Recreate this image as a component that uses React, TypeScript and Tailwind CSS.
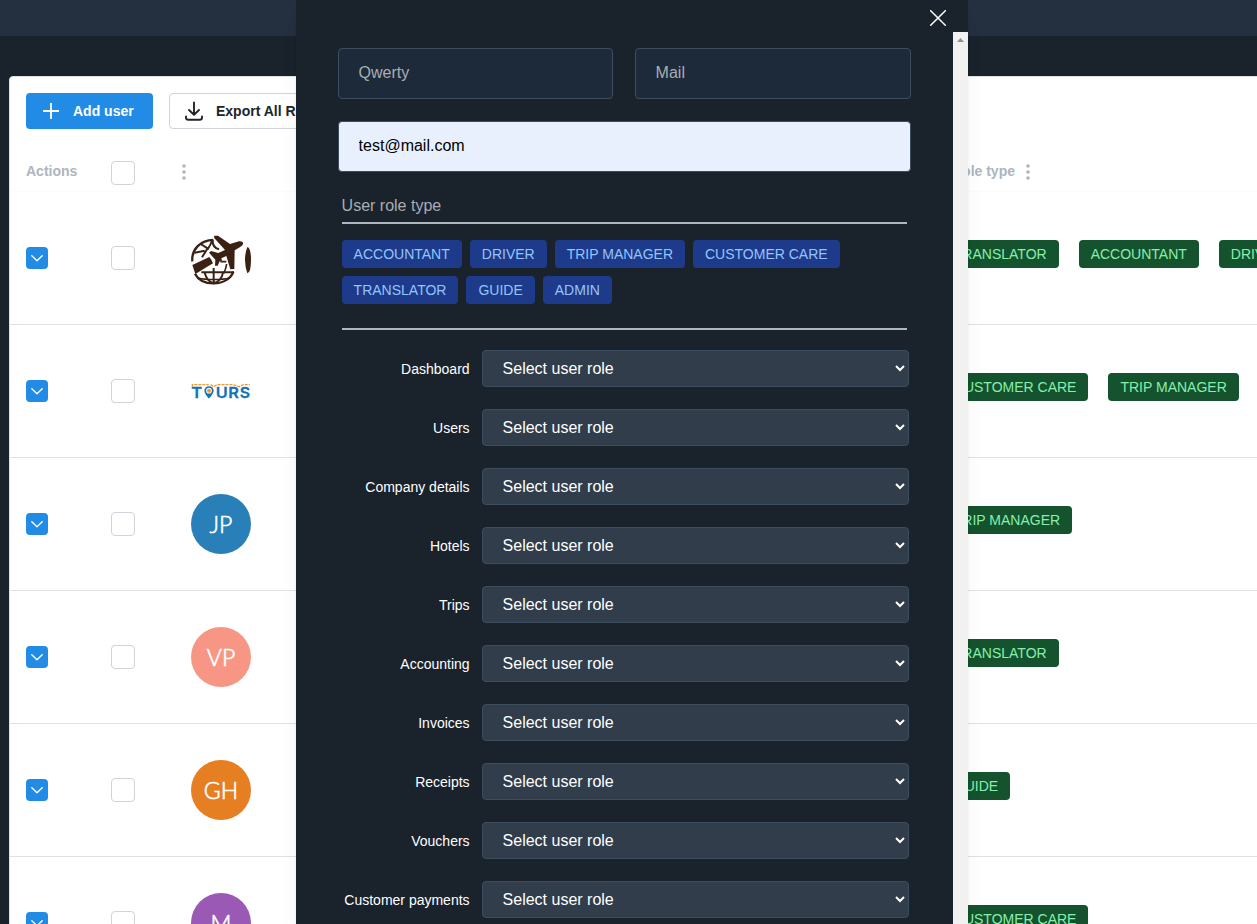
import React from "react";

const modules = [
  "Dashboard",
  "Users",
  "Company details",
  "Hotels",
  "Trips",
  "Accounting",
  "Invoices",
  "Receipts",
  "Vouchers",
  "Customer payments",
];

const roleTypes = ["ACCOUNTANT", "DRIVER", "TRIP MANAGER", "CUSTOMER CARE", "TRANSLATOR", "GUIDE", "ADMIN"];

function TravelLogo() {
  return (
    <svg viewBox="33 24 180 180" className="size-[60px]" fill="#3b2114">
      <g fill="none" stroke="#3b2114" strokeWidth="7">
        <path d="M37 124C34 88 62 60 100 60" />
        <path d="M45 161C56 183 80 190 101 190C132 190 154 174 160 155" />
        <path d="M44 98L74 92M62 72L84 86C90 78 94 68 97 60M82 86L66 112" strokeWidth="6" />
        <path d="M98 60C97 74 103 84 117 88" strokeWidth="6" />
        <path d="M64 157H162M101 144V192M74 158C78 174 88 186 101 190M129 158C126 174 116 186 101 190" strokeWidth="6" />
        <path d="M121 125H139M140 132C138 146 134 154 131 160M54 174C76 180 126 180 149 174" strokeWidth="5" />
      </g>
      <path d="M37 135L88 111L93 118L99 130L46 162Z" />
      <path d="M103 47L114 47L150 72L177 64C186 63 191 67 189 72C187 78 180 82 164 91L163 147L151 148L139 108L124 115L126 122L119 124L113 137L105 137L106 119L87 98L93 93L115 99L135 90L102 53Z" />
      <path d="M202 81Q213 84 213 119Q213 157 202 160Q195 139 195 119Q195 98 202 81Z" />
    </svg>
  );
}

function ToursLogo() {
  return (
    <svg viewBox="33 -27 180 180" className="size-[60px]">
      <path d="M37 50V44H86M92 44L101 50L111 44H158L179 50L190 44H210" fill="none" stroke="#f39a32" strokeWidth="4" strokeDasharray="9 3" />
      <g fill="#1272b6" stroke="#1272b6" strokeWidth="0.8" fontFamily="Inter, sans-serif" fontWeight="600" fontSize="45">
        <text x="34" y="84" textLength="33" lengthAdjust="spacingAndGlyphs">T</text>
        <text x="107" y="84" textLength="36" lengthAdjust="spacingAndGlyphs">U</text>
        <text x="145" y="84" textLength="32" lengthAdjust="spacingAndGlyphs">R</text>
        <text x="179" y="84" textLength="31" lengthAdjust="spacingAndGlyphs">S</text>
      </g>
      <path d="M87 86C82 79 73 70 73 62A14 13 0 0 1 101 62C101 70 92 79 87 86Z" fill="#1272b6" />
      <circle cx="87" cy="62" r="8.5" fill="#fff" />
      <circle cx="87" cy="62" r="6" fill="#f39a32" />
    </svg>
  );
}

function Initials({ text, color }: { text: string; color: string }) {
  return (
    <div
      className={`flex size-[60px] items-center justify-center rounded-full font-[Lato,sans-serif] text-[23px] font-light text-white [-webkit-text-stroke:0.6px_white] ${color}`}
    >
      {text}
    </div>
  );
}

const rows: { avatar: React.ReactNode; roles: string[] }[] = [
  { avatar: <TravelLogo />, roles: ["TRANSLATOR", "ACCOUNTANT", "DRIVER"] },
  { avatar: <ToursLogo />, roles: ["CUSTOMER CARE", "TRIP MANAGER"] },
  { avatar: <Initials text="JP" color="bg-[#2980b9]" />, roles: ["TRIP MANAGER"] },
  { avatar: <Initials text="VP" color="bg-[#f79684]" />, roles: ["TRANSLATOR"] },
  { avatar: <Initials text="GH" color="bg-[#e67e22]" />, roles: ["GUIDE"] },
  { avatar: <Initials text="M" color="bg-[#9b59b6]" />, roles: ["CUSTOMER CARE"] },
];

function Dots() {
  return (
    <svg className="h-4 w-1 shrink-0" viewBox="0 0 4 16" fill="#adb5bd">
      <circle cx="2" cy="2" r="1.8" />
      <circle cx="2" cy="8" r="1.8" />
      <circle cx="2" cy="14" r="1.8" />
    </svg>
  );
}

function Checkbox() {
  return <div className="size-6 rounded border border-[#ced4da] bg-white" />;
}

function UsersTable() {
  return (
    <section className="mt-10 ml-[9px] h-[900px] w-[1500px] rounded border border-[#dee2e6] bg-white text-sm">
      <div className="flex gap-4 pt-4 pl-4">
        <button className="flex h-9 w-[127px] items-center rounded bg-[#228be6] pl-[17px] font-bold text-white">
          <svg className="mr-[14px] size-4" viewBox="0 0 16 16" stroke="#fff" strokeWidth="1.8" strokeLinecap="round">
            <path d="M.5 8H15.5M8 .5V15.5" />
          </svg>
          Add user
        </button>
        <button className="flex h-9 w-[190px] items-center rounded border border-[#ced4da] bg-white pl-[15px] font-bold whitespace-nowrap text-[#212529]">
          <svg className="mr-[13px] h-5 w-[18px]" viewBox="0 0 18 20" fill="none" stroke="#212529" strokeWidth="1.9" strokeLinecap="round" strokeLinejoin="round">
            <path d="M9 1.5V13.5M4 9L9 13.8L14 9M1 15.5V16.5Q1 18.8 3.3 18.8H14.7Q17 18.8 17 16.5V15.5" />
          </svg>
          Export All Rows
        </button>
      </div>
      <div className="mt-[18px] flex h-[45px] items-center border-b border-[#fcfcfd] pt-2 pl-4 font-bold text-[#adb5bd]">
        <span className="w-[85px] pb-1">Actions</span>
        <div className="w-[71px]">
          <Checkbox />
        </div>
        <div className="w-[753px] pb-0.5">
          <Dots />
        </div>
        <div className="flex w-[95px] items-center justify-end gap-[11px] pb-0.5 whitespace-nowrap">
          <span className="pb-0.5">User role type</span>
          <Dots />
        </div>
      </div>
      {rows.map((row, i) => (
        <div key={i} className="flex h-[133px] items-center border-b border-[#dee2e6] pl-4">
          <div className="w-[85px]">
            <button className="flex size-[22px] items-center justify-center rounded bg-[#228be6]">
              <svg className="h-[7px] w-3" viewBox="0 0 12 7" fill="none" stroke="#fff" strokeWidth="1.4" strokeLinecap="round" strokeLinejoin="round">
                <path d="M.8.8L6 5.8L11.2.8" />
              </svg>
            </button>
          </div>
          <div className="w-20">
            <Checkbox />
          </div>
          <div className="w-[750.8px]">{row.avatar}</div>
          <div className="flex gap-5 pb-2">
            {row.roles.map((role) => (
              <span key={role} className="flex h-7 items-center rounded bg-[#14532d] px-3 whitespace-nowrap text-[#86efac]">
                {role}
              </span>
            ))}
          </div>
        </div>
      ))}
    </section>
  );
}

function UserDialog() {
  const field =
    "h-[51px] rounded border border-[#3d4d60] bg-[#1d2a39] px-5 pb-0.5 text-base text-black outline-none placeholder:text-[#a9adb4]";
  return (
    <div className="absolute top-0 left-[295.6px] flex h-[924px] w-[672px] flex-col bg-[#1a222c] shadow-[0_1px_3px_rgba(0,0,0,0.05),0_20px_25px_-5px_rgba(0,0,0,0.05),0_10px_10px_-5px_rgba(0,0,0,0.04)]">
      <div className="flex h-8 shrink-0 items-start justify-end pt-[10px] pr-[21.6px]">
        <svg className="size-4" viewBox="0 0 16 16" stroke="#fff" strokeWidth="1.5" strokeLinecap="round">
          <path d="M.7.7L15.3 15.3M15.3.7L.7 15.3" />
        </svg>
      </div>
      <div className="flex min-h-0 flex-1">
        <form className="w-[657px] overflow-hidden pt-4 pl-[42px]">
          <div className="flex gap-[22px]">
            <input className={`${field} w-[275px]`} placeholder="Qwerty" />
            <input className={`${field} w-[276px]`} placeholder="Mail" />
          </div>
          <input
            className="mt-[22px] block h-[51px] w-[573px] rounded border border-[#3d4d60] bg-[#e8f0fe] px-5 pb-0.5 text-base text-black outline-none"
            defaultValue="test@mail.com"
          />
          <div className="ml-1 w-[565px]">
            <div className="mt-[22px] h-[30px] border-b-2 border-[#aeb7c0] text-base text-[#a9adb4]">User role type</div>
            <div className="mt-4 flex h-[88px] flex-wrap content-start gap-2">
              {roleTypes.map((role) => (
                <span key={role} className="flex h-7 items-center rounded bg-[#1e3a8a] px-3 text-sm whitespace-nowrap text-[#93c5fd]">
                  {role}
                </span>
              ))}
            </div>
            <div className="h-0.5 bg-[#aeb7c0]" />
          </div>
          <div className="mt-5 flex flex-col gap-[22px]">
            {modules.map((name) => (
              <label key={name} className="flex h-[37px] items-center text-sm text-white">
                <span className="mr-3 w-[132px] text-right whitespace-nowrap">{name}</span>
                <select className="h-[37px] w-[427px] rounded border border-[#3d4d60] bg-[#313d4a] pl-4 text-base text-white outline-none">
                  <option>Select user role</option>
                </select>
              </label>
            ))}
          </div>
        </form>
        <div className="flex w-[15px] justify-center bg-[#f1f1f1] pt-[6px]">
          <svg className="h-1 w-[7px]" viewBox="0 0 7 4" fill="#8f8f8f">
            <path d="M0 4L3.5 0L7 4Z" />
          </svg>
        </div>
      </div>
    </div>
  );
}

export default function App() {
  return (
    <div className="relative h-[924px] w-full overflow-hidden bg-[#1a222c] font-['Liberation_Sans',Arial,sans-serif]">
      <header className="h-9 bg-[#24303f]" />
      <UsersTable />
      <UserDialog />
    </div>
  );
}
